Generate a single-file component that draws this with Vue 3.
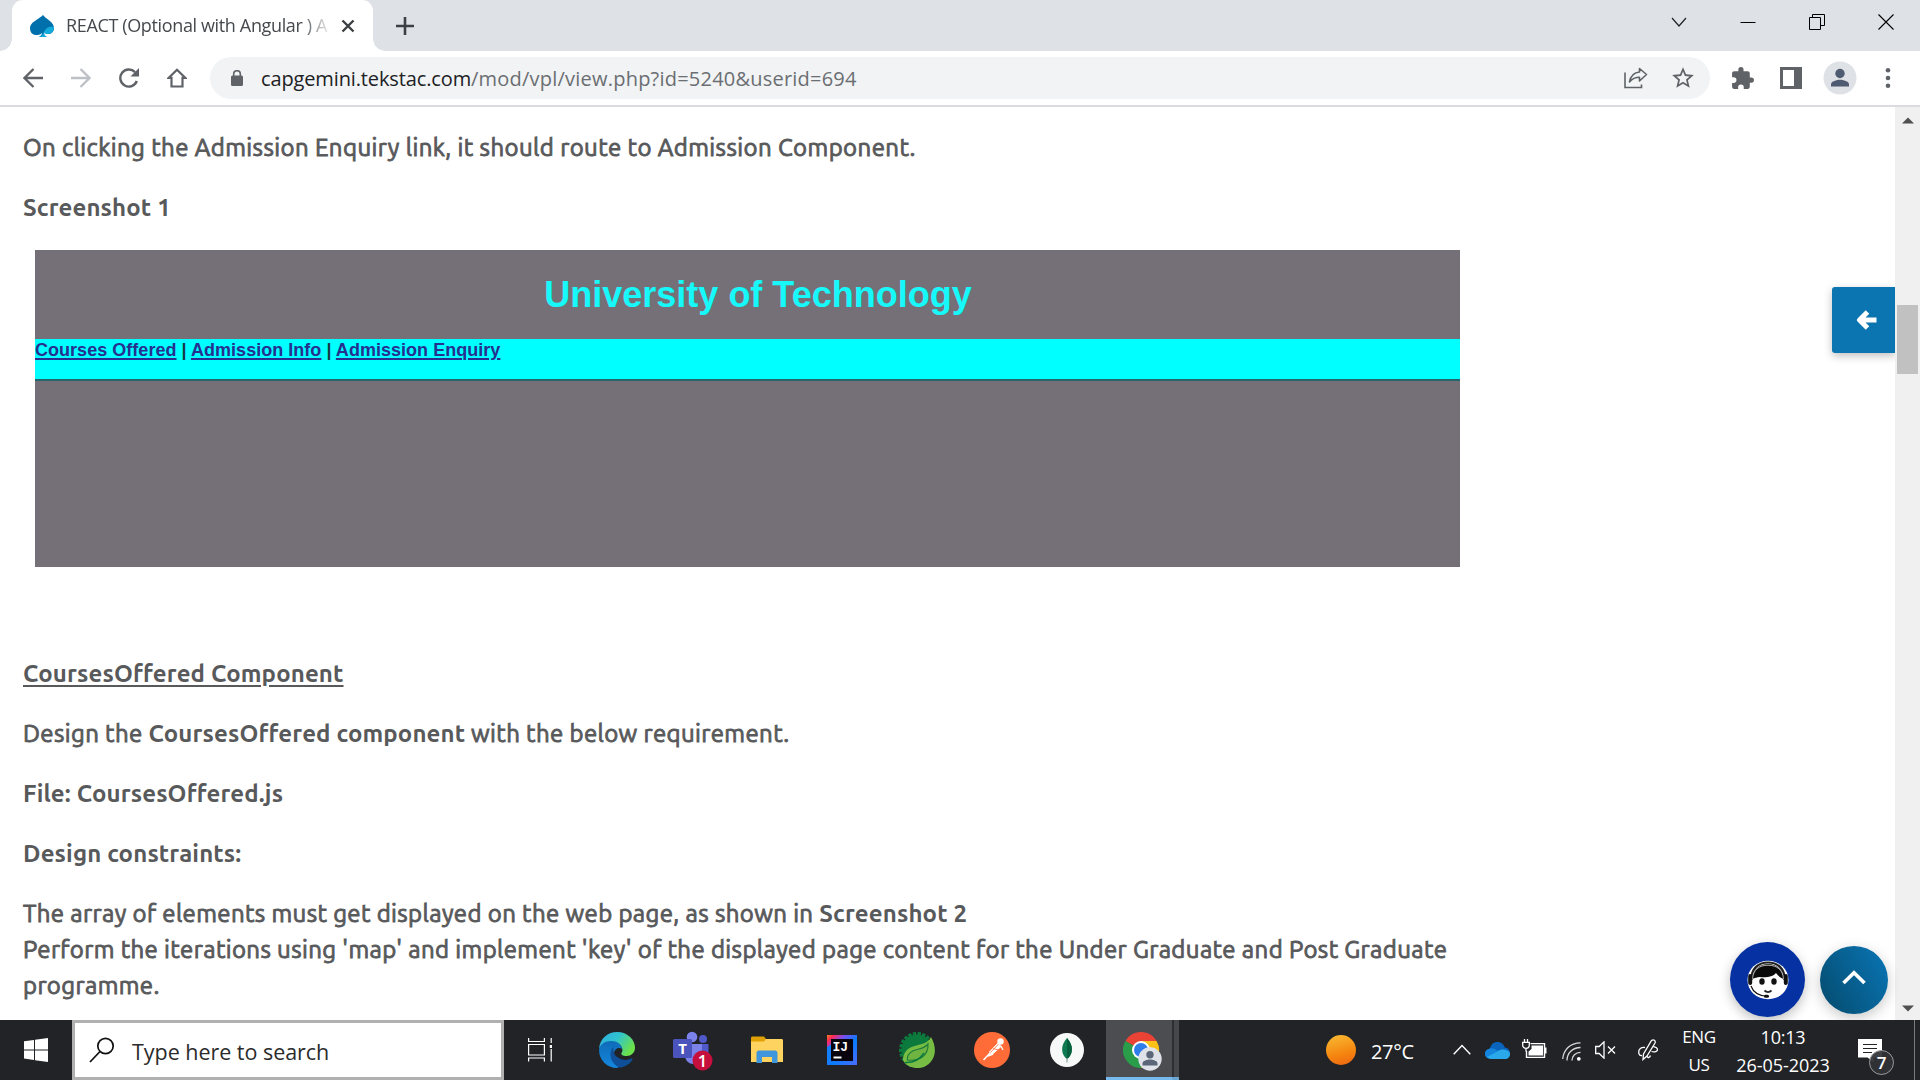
<script setup>
const links = ['Courses Offered', 'Admission Info', 'Admission Enquiry']
const teeth = Array.from({ length: 13 }, (_, i) => 112 + i * 16.5)
</script>

<template>
  <div class="screen">
    <header class="tabstrip">
      <div class="tab">
        <svg class="favicon" viewBox="0 0 24 22" width="24" height="22">
          <path d="M13 0C16 4 24 7 24 13c0 4-3 6-6 6-2 0-3-1-4-2 0 2-1 4 3 5H9c2-1 3-3 3-4-2 2-4 2-6 2-4 0-6-3-6-7C0 7 8 5 13 0z" fill="#0070ad" />
          <path d="M24 12c0 4-2.500 7-6 7-2 0-3-1-3.600-2 0 2 0 4 2.600 5H9c3-1 4-3 5-5 2-5 6-6 10-5z" fill="#12abdb" />
        </svg>
        <span class="tab-title">REACT (Optional with Angular ) A</span>
        <svg class="tab-close" viewBox="0 0 14 14" width="14" height="14"><path d="M1.500 1.500l11 11M12.500 1.500l-11 11" stroke="#3c4043" stroke-width="2.400" fill="none" /></svg>
      </div>
      <svg class="plus" viewBox="0 0 18 18" width="18" height="18"><path d="M9 0v18M0 9h18" stroke="#3c4043" stroke-width="2.600" /></svg>
      <div class="window-buttons">
        <svg viewBox="0 0 16 16" width="16" height="16"><path d="M1 4l7 8 7-8" fill="none" stroke="#222" stroke-width="1.200" /></svg>
        <svg viewBox="0 0 16 16" width="16" height="16"><path d="M0.500 8.500h15" stroke="#000" /></svg>
        <svg viewBox="0 0 16 16" width="16" height="16"><path d="M.5 3.500h11v12H.5zM3.500 3.500v-3h12v11h-4" fill="none" stroke="#000" /></svg>
        <svg viewBox="0 0 16 16" width="16" height="16"><path d="M.5.5l15 15M15.500.5l-15 15" stroke="#000" stroke-width="1.100" /></svg>
      </div>
    </header>

    <div class="toolbar">
      <svg class="nav" viewBox="0 0 20 20" width="20" height="20"><path d="M20 10H2M10.500 1L1.500 10l9 9" fill="none" stroke="#5f6368" stroke-width="2.300" /></svg>
      <svg class="nav" viewBox="0 0 20 20" width="20" height="20"><path d="M0 10h18M9.500 1l9 9-9 9" fill="none" stroke="#bdc1c6" stroke-width="2.300" /></svg>
      <svg class="nav" viewBox="0 0 20 20" width="20" height="20"><path d="M17.800 13A8.500 8.500 0 1 1 16 4.200" fill="none" stroke="#5f6368" stroke-width="2.400" /><path d="M20 0v8.500h-8.500z" fill="#5f6368" /></svg>
      <svg class="nav" viewBox="0 0 20 20" width="20" height="20"><path d="M10 1.700L1.800 9.800h2.700v8.700h11V9.800h2.700z" fill="none" stroke="#5f6368" stroke-width="2.200" /></svg>
      <div class="address">
        <svg viewBox="0 0 12 16" width="12" height="16"><rect y="5.500" width="12" height="10.500" rx="1.500" fill="#5f6368" /><path d="M2.700 6V4a3.300 3.300 0 0 1 6.600 0v2" fill="none" stroke="#5f6368" stroke-width="1.600" /></svg>
        <span class="url"><span class="domain">capgemini.tekstac.com</span><span class="path">/mod/vpl/view.php?id=5240&amp;userid=694</span></span>
        <svg class="share" viewBox="0 0 24 22" width="24" height="22"><path d="M1 5.500V20.500H17.500V17.500" fill="none" stroke="#5f6368" stroke-width="1.600" /><path d="M15.500 1.500L22.500 7.500l-7 6.500v-3.700C11 10.300 8 12 5.500 15 6.500 9.500 9.500 5.500 15.500 5z" fill="none" stroke="#5f6368" stroke-width="1.600" stroke-linejoin="round" /></svg>
        <svg viewBox="0 0 24 24" width="26" height="26"><path d="M22 9.240l-7.190-.62L12 2 9.190 8.630 2 9.240l5.460 4.730L5.820 21 12 17.270 18.180 21l-1.630-7.030L22 9.240zM12 15.400l-3.760 2.270 1-4.280-3.320-2.880 4.380-.38L12 6.100l1.710 4.040 4.380.38-3.320 2.880 1 4.280L12 15.400z" fill="#5f6368" /></svg>
      </div>
      <svg class="ext" viewBox="0 0 24 24" width="25" height="25"><path d="M20.500 11H19V7c0-1.100-.9-2-2-2h-4V3.500a2.500 2.500 0 0 0-5 0V5H4c-1.100 0-2 .9-2 2v3.800h1.500a2.700 2.700 0 0 1 0 5.400H2V20c0 1.100.9 2 2 2h3.800v-1.500a2.700 2.700 0 0 1 5.400 0V22H17c1.100 0 2-.9 2-2v-4h1.500a2.500 2.500 0 0 0 0-5z" fill="#5f6368" /></svg>
      <svg class="panel" viewBox="0 0 22 22" width="22" height="22"><rect width="22" height="22" fill="#5f6368" /><rect x="3" y="3" width="11" height="16" fill="#fff" /></svg>
      <svg class="profile" viewBox="0 0 34 34" width="34" height="34"><circle cx="17" cy="17" r="16.500" fill="#dee1e6" /><circle cx="17" cy="12.500" r="4.700" fill="#4f5b70" /><path d="M8 25.500v-2c0-3.200 6-4.700 9-4.700s9 1.500 9 4.700v2z" fill="#4f5b70" /></svg>
      <svg class="menu" viewBox="0 0 6 20" width="6" height="20"><circle cx="3" cy="2.300" r="2.300" fill="#5f6368" /><circle cx="3" cy="10" r="2.300" fill="#5f6368" /><circle cx="3" cy="17.700" r="2.300" fill="#5f6368" /></svg>
    </div>

    <div class="viewport">
      <main class="content">
        <p class="intro">On clicking the Admission Enquiry link, it should route to Admission Component.</p>
        <p><b>Screenshot 1</b></p>
        <section class="shot">
          <h1>University of Technology</h1>
          <nav class="shot-nav">
            <template v-for="(link, i) in links" :key="link"><span v-if="i" class="bar"> | </span><u>{{ link }}</u></template>
          </nav>
        </section>
        <p class="section-title"><b><u>CoursesOffered Component</u></b></p>
        <p>Design the <b>CoursesOffered component</b> with the below requirement.</p>
        <p><b>File: CoursesOffered.js</b></p>
        <p><b>Design constraints:</b></p>
        <p>The array of elements must get displayed on the web page, as shown in <b>Screenshot 2</b><br />Perform the iterations using 'map' and implement 'key' of the displayed page content for the Under Graduate and Post Graduate<br />programme.</p>
      </main>
      <div class="scrollbar">
        <svg viewBox="0 0 12 7" width="12" height="7"><path d="M0 6.500L6 .5l6 6z" fill="#505050" /></svg>
        <div class="thumb"></div>
        <svg viewBox="0 0 12 7" width="12" height="7"><path d="M0 .5l6 6 6-6z" fill="#505050" /></svg>
      </div>
      <div class="drawer-toggle">
        <svg viewBox="0 0 22 22" width="22" height="22"><path d="M20.500 11H5M11.500 3l-8 8 8 8" fill="none" stroke="#fff" stroke-width="5" stroke-linejoin="round" /></svg>
      </div>
      <div class="assistant">
        <svg viewBox="0 0 42 40" width="42" height="40">
          <ellipse cx="21" cy="20" rx="20.500" ry="19.300" fill="#fff" />
          <path d="M5 19C6 9 13 4 21 4s15 5 16 15c-3-1-6-3-8-6-3 4-11 5-16 4-3 0-5 1-8 2z" fill="#0a0a0a" />
          <path d="M4.500 20C4 9 11 2.500 21 2.500S38 9 37.500 20" fill="none" stroke="#222" stroke-width="2.200" />
          <path d="M5.500 19C6 10 12 5.200 21 5.200S36 10 36.500 19" fill="none" stroke="#bbb" stroke-width="1" />
          <rect x="1.200" y="14" width="4" height="11" rx="2" fill="#111" /><rect x="36.800" y="14" width="4" height="11" rx="2" fill="#111" />
          <ellipse cx="15" cy="21.500" rx="2.700" ry="3.300" fill="#111" /><ellipse cx="27" cy="21.500" rx="2.700" ry="3.300" fill="#111" />
          <path d="M17.500 30.500c2 2 5 2 7 0" fill="none" stroke="#222" stroke-width="1.800" />
          <path d="M4 26c2 6 8 10 17 10.500" fill="none" stroke="#111" stroke-width="1.200" /><rect x="17" y="34.700" width="5" height="3" rx="1.500" fill="#111" />
        </svg>
      </div>
      <div class="to-top">
        <svg viewBox="0 0 26 16" width="26" height="16"><path d="M2.500 13L13 2.800 23.500 13" fill="none" stroke="#fff" stroke-width="3.600" /></svg>
      </div>
    </div>

    <footer class="taskbar">
      <div class="start">
        <svg viewBox="0 0 24 24" width="24" height="24"><path d="M0 3.300L10 2v9.400H0zM11 1.800L24 0v11.400H11zM0 12.400h10v9.500L0 20.500zM11 12.400h13V24l-13-1.800z" fill="#fff" /></svg>
      </div>
      <div class="search">
        <svg viewBox="0 0 26 26" width="26" height="26"><circle cx="16.500" cy="9" r="7.700" fill="none" stroke="#111" stroke-width="1.700" /><path d="M11 14.500L1 25" stroke="#111" stroke-width="1.800" /></svg>
        <span>Type here to search</span>
      </div>
      <div class="taskview">
        <svg viewBox="0 0 24 24" width="24" height="24"><path d="M.6 0v3.500h15.800V0M.6 6.500h15.800v10.500H.6zM.6 23.500V20h15.800v3.500M23.200 0v5M23.200 11v12.500" fill="none" stroke="#fff" stroke-width="1.200" /><rect x="21.800" y="7" width="2.200" height="3" fill="#fff" /></svg>
      </div>
      <div class="app">
        <svg viewBox="0 0 36 36" width="36" height="36">
          <defs>
            <linearGradient id="edgeTop" x1="0" y1="0" x2="1" y2=".5"><stop offset="0" stop-color="#2fa9e0" /><stop offset=".5" stop-color="#2fc3d0" /><stop offset="1" stop-color="#6be14b" /></linearGradient>
            <linearGradient id="edgeLow" x1="0" y1="0" x2="0" y2="1"><stop offset="0" stop-color="#0f6bb8" /><stop offset="1" stop-color="#1487de" /></linearGradient>
          </defs>
          <path d="M0 17C1 6 9 0 18 0c11 0 18 8 18 15.500C36 21 32 24 27.500 24c-4 0-6-1.500-5-3 3-4-1-9.500-7-10C8 10.500 2 13 0 17z" fill="url(#edgeTop)" />
          <path d="M0 18C1 12 6 9 12 9c6 0 11 3.500 11 8-2-2-8-1-8 5 0 5 4 9 9 11l-6 3C8 36 0 28 0 18z" fill="url(#edgeLow)" />
          <path d="M14.500 14.500C9 20 11 32 21 35.700c6-1 10-4 12.500-8.200.3-.8-.3-1.300-1-.9-6 2.700-13 1-16.500-3.600-1.500-2.500-2-6-1.500-8.500z" fill="#0e4f97" />
        </svg>
      </div>
      <div class="app teams">
        <svg viewBox="0 0 40 38" width="40" height="44">
          <circle cx="19" cy="6" r="5.300" fill="#7b83eb" /><circle cx="30" cy="8" r="4" fill="#5059c9" />
          <path d="M24 13h11.500v11a6 6 0 0 1-8 5.500z" fill="#5059c9" /><path d="M12 13h17v11c0 12-17 12-17 0z" fill="#7b83eb" />
          <rect y="8" width="19" height="19" rx="1.500" fill="#4b53bc" />
          <text x="9.500" y="23" text-anchor="middle" class="teams-t">T</text>
          <circle cx="29.500" cy="29.500" r="10" fill="#c50f3c" />
          <text x="29.500" y="35.500" text-anchor="middle" class="teams-count">1</text>
        </svg>
      </div>
      <div class="app">
        <svg viewBox="0 0 32 28" width="32" height="28"><path d="M0 2c0-1 .5-1.500 1.500-1.500H13L15 3v4H0z" fill="#e0a106" /><path d="M0 5.500h13l2-2.500h15.500c1 0 1.500.5 1.500 1.500V26H0z" fill="#fed35f" /><path d="M5.500 27V17c0-1.500 1-2.500 2.500-2.500h16c1.500 0 2.500 1 2.500 2.500v10h-5.500v-6h-10v6z" fill="#3f96dc" /></svg>
      </div>
      <div class="app">
        <svg viewBox="0 0 30 30" width="30" height="30">
          <defs><linearGradient id="ijGrad" x1="0" y1="0" x2="1" y2="1"><stop offset="0" stop-color="#fc801d" /><stop offset=".12" stop-color="#fe2857" /><stop offset=".3" stop-color="#7a4ff0" /><stop offset=".55" stop-color="#087cfa" /><stop offset="1" stop-color="#4d6bff" /></linearGradient></defs>
          <rect width="30" height="30" fill="url(#ijGrad)" /><path d="M0 12l5-3v16l-5 5z" fill="#147dfa" /><rect x="4" y="4" width="22" height="22" fill="#08030d" />
          <text x="5.500" y="15.500" class="ij">IJ</text><rect x="6.500" y="21.500" width="8" height="2" fill="#fff" />
        </svg>
      </div>
      <div class="app">
        <svg viewBox="0 0 36 36" width="36" height="36">
          <circle cx="18" cy="18" r="15.500" fill="#0c7a3d" />
          <rect v-for="a in teeth" :key="a" x="32.500" y="16.500" width="3.500" height="3.400" fill="#0c7a3d" :transform="`rotate(${a} 18 18)`" />
          <path d="M32 5c3.500 6 5 13 3 19-3 9-12 14-21 11.500-5-1-8.500-4-10-7.500 0-6 3-11 10-13.500 7-2.500 15-2.500 18-9.500z" fill="#77bc43" />
          <path d="M8.500 28c-1-6 4.500-9.500 9.500-10.500 4-.8 8-2 11-5.500.5 11-8 17.500-20.500 16z" fill="#6fb440" stroke="#1d7c3c" stroke-width="1.200" />
          <path d="M6 30.500c8 .5 15-3.500 19-9.500" fill="none" stroke="#0c7a3d" stroke-width="1.400" />
        </svg>
      </div>
      <div class="app">
        <svg viewBox="0 0 36 36" width="36" height="36"><circle cx="18" cy="18" r="18" fill="#ff6c37" /><circle cx="26.500" cy="9.500" r="3.200" fill="#fff" /><path d="M24 11l3 3.500-9 8-2.500-2.500z" fill="#fff" stroke="#fff" /><path d="M17 20l-7.500 8M19 22l-5 2" stroke="#fff" stroke-width="1.600" /><path d="M19 16.500l5.500 1.500M24.500 12l-8 8.500" stroke="#ff6c37" stroke-width=".8" /><path d="M27 14l2 4" stroke="#fff" stroke-width="1.300" /></svg>
      </div>
      <div class="app">
        <svg viewBox="0 0 34 34" width="34" height="34"><circle cx="17" cy="17" r="17" fill="#f7f9f9" /><path d="M17 5c7 8 6 16 0 21.500C11 21 10 13 17 5z" fill="#0f7a4f" /><path d="M17 5c7 8 6 16 0 21.500z" fill="#06603c" /><path d="M16.300 25h1.400v4.500h-1.400z" fill="#9ab3a6" /></svg>
      </div>
      <div class="app active">
        <svg viewBox="0 0 40 40" width="40" height="40">
          <path d="M18 18L2.400 9A18 18 0 0 1 33.600 9H18z" fill="#ea4335" /><path d="M2.400 9A18 18 0 0 0 18 36l7.500-13.500L18 18z" fill="#2a9d4a" /><path d="M18 9h15.600A18 18 0 0 1 18 36l8-14z" fill="#fbc116" />
          <circle cx="18" cy="18" r="9" fill="#fff" /><circle cx="18" cy="18" r="7" fill="#2f7de9" />
          <circle cx="27" cy="27" r="11.700" fill="#dfe2e8" /><circle cx="27" cy="22.700" r="3.700" fill="#5b6678" /><path d="M19.500 33.500v-2c0-3 5-4 7.500-4s7.500 1 7.500 4v2z" fill="#5b6678" />
        </svg>
      </div>
      <div class="stack-edge"></div>
      <div class="tray">
        <div class="sun"></div>
        <span class="temp">27°C</span>
        <svg class="t-chev" viewBox="0 0 18 11" width="18" height="11"><path d="M.7 10.300L9 1.500l8.300 8.800" fill="none" stroke="#fff" stroke-width="1.400" /></svg>
        <svg class="t-cloud" viewBox="0 0 25 17" width="25" height="17"><path d="M5 16C1 16 0 13.500 0 11.500 0 9 2 7 5 6.500 6 2 9 0 12.500 0c4 0 6.500 2.500 7.300 5.500 3 .3 5.200 2.500 5.200 5.700C25 14 23 16 20 16z" fill="#0a64bc" /><path d="M5 16.500C1 16.500 0 14 0 11.500 0 9 2 7 5 6.500c3-.5 5 .5 8 2.500L3 16z" fill="#1484dc" /><path d="M4 16.500C2.500 16 2 15 2 15l11-6c3-3 12-1.500 12 3 0 3-2 5-5 5H5z" fill="#29a8ea" /></svg>
        <svg class="t-batt" viewBox="0 0 25 20" width="25" height="20"><path d="M8.500 4.600h14v13.800H4.500V12M23.800 8.500v6" fill="none" stroke="#fff" stroke-width="1.400" /><path d="M9.500 6.500h11.500v10H6.500V12.500L9.500 10z" fill="#fff" /><path d="M2.500 0v3M5.500 0v3M.7 3.300h6.600v3c0 4-6.600 4-6.600 0zM4 9v3.500" fill="none" stroke="#fff" stroke-width="1.300" /></svg>
        <svg class="t-wifi" viewBox="0 0 19 19" width="19" height="19"><g fill="none" stroke="#d8d8d8" stroke-width="1.300"><path d="M.7 17C1.500 8 8 .8 18.500.8M5 18.500c0-7.500 5.500-13 13.500-13M10 18.500c0-4.500 3.500-8.200 8.500-8.200" /></g><circle cx="16.800" cy="16.800" r="1.900" fill="#fff" /></svg>
        <svg class="t-vol" viewBox="0 0 21 18" width="21" height="18"><path d="M.7 5.500h3.500L9 .9v16.200l-4.800-4.600H.7zM13 5.500l7 7M20 5.500l-7 7" fill="none" stroke="#fff" stroke-width="1.300" /></svg>
        <svg class="t-pen" viewBox="0 0 20 22" width="20" height="22"><path d="M13.500 1.500c2-1.500 4.500 0 3.500 2.500L9 17l-4 3.500.5-5.500zM7 8.500C3 8 .7 10 .7 13s1.500 4 3.300 3.500M9 17c1 3 3 1 3.500-.5M15 7.500c3 1 4.500 1 4.500 3s-3 3-6 2" fill="none" stroke="#fff" stroke-width="1.300" /></svg>
        <div class="lang"><span>ENG</span><span>US</span></div>
        <div class="clock"><span class="time">10:13</span><span>26-05-2023</span></div>
        <div class="notify">
          <svg viewBox="0 0 24 23" width="24" height="23"><path d="M0 0h24v18.500h-8.500V23L9.500 18.500H0z" fill="#fff" /><path d="M5 5.500h14M5 9.500h14M5 13.500h9" stroke="#222" stroke-width="1.200" /></svg>
          <span class="badge">7</span>
        </div>
        <div class="desktop-edge"></div>
      </div>
    </footer>
  </div>
</template>

<style>
body { margin: 0; overflow: hidden; }
</style>

<style scoped>
.screen { position: relative; width: 1920px; height: 1080px; display: flex; flex-direction: column; background: #fff; font-family: "Segoe UI", "Open Sans", "Noto Sans", sans-serif; overflow: hidden; }
svg { display: block; flex: none; }
.tabstrip { height: 51px; flex: none; background: #dee1e6; display: flex; align-items: center; }
.tab { position: relative; width: 361px; height: 51px; margin-left: 12px; background: #fff; border-radius: 11px 11px 0 0; display: flex; align-items: center; box-sizing: border-box; padding-left: 18px; }
.tab::before, .tab::after { content: ""; position: absolute; bottom: 0; width: 12px; height: 12px; }
.tab::before { left: -12px; background: radial-gradient(circle at 0 0, #dee1e6 11.500px, #fff 12px); }
.tab::after { right: -12px; background: radial-gradient(circle at 100% 0, #dee1e6 11.500px, #fff 12px); }
.tab-title { width: 263px; margin-left: 12px; margin-bottom: 1px; overflow: hidden; white-space: nowrap; font-size: 18px; letter-spacing: -.36px; color: #45494d; -webkit-mask-image: linear-gradient(90deg, #000 235px, transparent 266px); mask-image: linear-gradient(90deg, #000 235px, transparent 266px); }
.tab-close { margin-left: 12px; }
.plus { margin-left: 23px; }
.window-buttons { margin-left: auto; margin-right: 26px; margin-bottom: 8px; display: flex; gap: 53px; }
.toolbar { height: 54px; flex: none; display: flex; align-items: center; padding-left: 23px; border-bottom: 2px solid #dadce0; background: #fff; }
.nav { margin-right: 28px; }
.address { width: 1500px; height: 42px; margin-left: -5px; border-radius: 21px; background: #f1f3f4; display: flex; align-items: center; box-sizing: border-box; padding: 0 14px 0 21px; }
.url { margin-left: 18px; font-size: 20px; white-space: nowrap; color: #6b6e72; }
.domain { color: #202124; letter-spacing: -.13px; }
.path { letter-spacing: .22px; }
.share { margin-left: auto; margin-right: 22px; }
.ext { margin-left: 20px; }
.panel { margin-left: 25px; }
.profile { margin-left: 21px; }
.menu { margin-left: 28px; }
.viewport { position: relative; flex: 1; display: flex; overflow: hidden; }
.content { flex: 1; padding: 23px 0 0 23px; font-family: "Ubuntu", "Noto Sans", sans-serif; font-size: 24px; line-height: 36px; color: #58595b; white-space: nowrap; overflow: hidden; letter-spacing: .38px; -webkit-text-stroke: .85px #58595b; }
.content p { margin: 0 0 24px; }
.content .intro { letter-spacing: .415px; }
.content b { font-weight: 700; letter-spacing: .14px; -webkit-text-stroke: 0; }
.content p b u { text-underline-offset: 3px; text-decoration-thickness: 2px; }
.content .section-title { margin-top: 89px; }
.shot { width: 1425px; height: 317px; margin: 1px 0 0 12px; background: #757077; font-family: "Liberation Sans", Arial, sans-serif; font-weight: 700; letter-spacing: 0; -webkit-text-stroke: 0; }
.shot h1 { height: 89px; margin: 0; padding-left: 21px; text-align: center; font-size: 36px; line-height: 89px; color: #16f8fa; }
.shot-nav { height: 40px; background: #0ff; border-bottom: 2px solid #25666c; font-size: 18px; line-height: 22px; letter-spacing: .03px; color: #25308f; white-space: pre; }
.shot-nav u { text-underline-offset: 2px; text-decoration-thickness: 1.500px; }
.bar { color: #173b45; }
.scrollbar { width: 25px; background: #f0f0f0; display: flex; flex-direction: column; align-items: center; box-sizing: border-box; padding: 10px 0 8px; }
.thumb { width: 21px; height: 69px; margin-top: 181px; margin-bottom: auto; background: #c1c1c1; }
.drawer-toggle { position: absolute; right: 25px; top: 180px; width: 63px; height: 66px; border-radius: 3px 0 0 3px; background: #0b75b1; box-shadow: 0 3px 9px rgba(0, 0, 0, .25); display: flex; align-items: center; box-sizing: border-box; padding-left: 24px; clip-path: inset(-15px 0 -15px -15px); }
.assistant { position: absolute; left: 1730px; top: 835px; width: 75px; height: 75px; border-radius: 50%; background: #0531a3; box-shadow: 0 4px 12px rgba(0, 0, 0, .25); display: flex; align-items: center; justify-content: center; }
.to-top { position: absolute; left: 1820px; top: 839px; width: 68px; height: 68px; border-radius: 50%; background: linear-gradient(60deg, #044a6c, #0a76b6); box-shadow: 0 4px 14px rgba(0, 0, 0, .22); display: flex; align-items: center; justify-content: center; }
.to-top svg { margin-bottom: 4px; }
.taskbar { height: 60px; flex: none; display: flex; background: #212327; color: #fff; }
.start { width: 72px; display: flex; align-items: center; justify-content: center; }
.search { width: 432px; box-sizing: border-box; border: 3px solid #b0b0b0; background: #fff; display: flex; align-items: center; padding-left: 14px; }
.search span { margin: 2px 0 0 17px; font-size: 21.500px; letter-spacing: -.03px; color: #2b2b2b; }
.taskview { width: 75px; display: flex; align-items: center; justify-content: center; box-sizing: border-box; padding-right: 3px; }
.app { width: 75px; display: flex; align-items: center; justify-content: center; }
.app.teams { box-sizing: border-box; padding-left: 2px; }
.app.active { width: 66px; margin-left: 2px; background: #4b4d50; box-shadow: inset 0 -3px #76b9ed; box-sizing: border-box; padding-left: 8px; padding-top: 4px; }
.stack-edge { width: 7px; background: linear-gradient(90deg, #2c2e31 2px, #45474a 2px); box-shadow: inset 0 -3px #6aa5d4; }
.teams-t { font: 700 15px "Open Sans", sans-serif; fill: #fff; }
.teams-count { font: 600 16.500px "Open Sans", sans-serif; fill: #fff; }
.ij { font: 700 13px "Liberation Mono", monospace; fill: #fff; }
.tray { margin-left: auto; width: 594px; display: flex; align-items: center; }
.sun { width: 30px; height: 30px; border-radius: 50%; background: linear-gradient(165deg, #f8bd34, #f5860f 60%, #ee6410); flex: none; }
.temp { width: 80px; margin: 2px 0 0 15px; font-size: 20px; letter-spacing: -.35px; white-space: nowrap; }
.t-chev { margin-left: 2px; margin-bottom: 2px; }
.t-cloud { margin-left: 14px; }
.t-batt { margin-left: 12px; margin-bottom: 2px; }
.t-wifi { margin-left: 15px; margin-top: 2px; }
.t-vol { margin-left: 14px; }
.t-pen { margin-left: 22px; }
.lang, .clock { display: flex; flex-direction: column; align-items: center; line-height: 28px; white-space: nowrap; margin-bottom: -1px; }
.lang { width: 40px; margin-left: 21px; font-size: 17px; letter-spacing: -.4px; }
.clock { width: 100px; margin-left: 14px; font-size: 18px; letter-spacing: -.05px; }
.time { letter-spacing: -.2px; }
.notify { position: relative; margin-left: 25px; }
.badge { position: absolute; left: 11px; top: 11px; width: 23px; height: 23px; border: 1px solid #9a9a9a; border-radius: 50%; background: rgba(50, 51, 54, .93); font-size: 17px; font-weight: 600; line-height: 23px; text-align: center; }
.desktop-edge { width: 1px; height: 60px; margin-left: 32px; background: #7b7b7b; }
</style>
